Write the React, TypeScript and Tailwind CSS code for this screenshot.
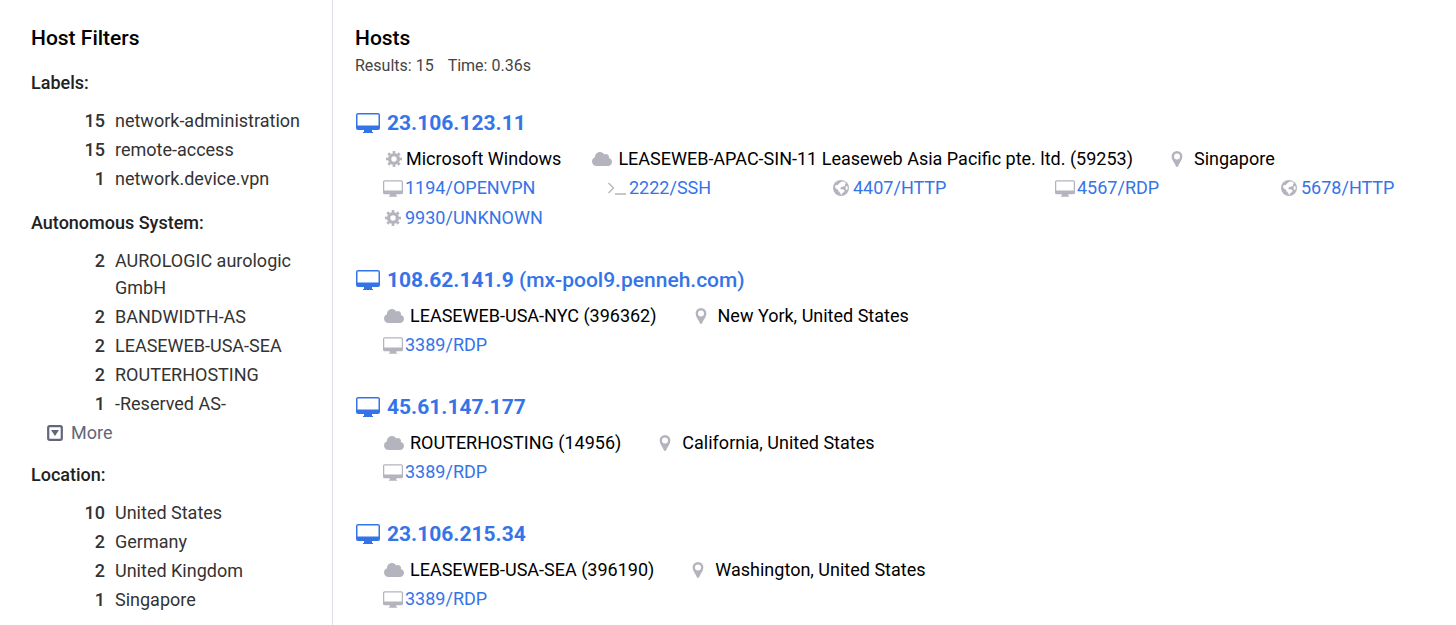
import React from 'react';
import { FaCloud } from 'react-icons/fa';

type ServiceKind = 'desktop' | 'terminal' | 'globe' | 'cog';

interface Service {
  name: string;
  kind: ServiceKind;
}

interface Host {
  ip: string;
  dns?: string;
  os?: string;
  network: string;
  location: string;
  services: Service[];
}

interface Filter {
  title: string;
  items: { count: number; label: string }[];
  more?: boolean;
}

const filters: Filter[] = [
  {
    title: 'Labels:',
    items: [
      { count: 15, label: 'network-administration' },
      { count: 15, label: 'remote-access' },
      { count: 1, label: 'network.device.vpn' },
    ],
  },
  {
    title: 'Autonomous System:',
    items: [
      { count: 2, label: 'AUROLOGIC aurologic GmbH' },
      { count: 2, label: 'BANDWIDTH-AS' },
      { count: 2, label: 'LEASEWEB-USA-SEA' },
      { count: 2, label: 'ROUTERHOSTING' },
      { count: 1, label: '-Reserved AS-' },
    ],
    more: true,
  },
  {
    title: 'Location:',
    items: [
      { count: 10, label: 'United States' },
      { count: 2, label: 'Germany' },
      { count: 2, label: 'United Kingdom' },
      { count: 1, label: 'Singapore' },
    ],
  },
];

const hosts: Host[] = [
  {
    ip: '23.106.123.11',
    os: 'Microsoft Windows',
    network: 'LEASEWEB-APAC-SIN-11 Leaseweb Asia Pacific pte. ltd. (59253)',
    location: 'Singapore',
    services: [
      { name: '1194/OPENVPN', kind: 'desktop' },
      { name: '2222/SSH', kind: 'terminal' },
      { name: '4407/HTTP', kind: 'globe' },
      { name: '4567/RDP', kind: 'desktop' },
      { name: '5678/HTTP', kind: 'globe' },
      { name: '9930/UNKNOWN', kind: 'cog' },
    ],
  },
  {
    ip: '108.62.141.9',
    dns: '(mx-pool9.penneh.com)',
    network: 'LEASEWEB-USA-NYC (396362)',
    location: 'New York, United States',
    services: [{ name: '3389/RDP', kind: 'desktop' }],
  },
  {
    ip: '45.61.147.177',
    network: 'ROUTERHOSTING (14956)',
    location: 'California, United States',
    services: [{ name: '3389/RDP', kind: 'desktop' }],
  },
  {
    ip: '23.106.215.34',
    network: 'LEASEWEB-USA-SEA (396190)',
    location: 'Washington, United States',
    services: [{ name: '3389/RDP', kind: 'desktop' }],
  },
];

const DesktopIcon = ({ className }: { className: string }) => (
  <svg viewBox="0 0 24 20" fill="currentColor" fillRule="evenodd" className={className} aria-hidden="true">
    <path d="M2 0h20a2 2 0 0 1 2 2v13a2 2 0 0 1-2 2h-6v2h1v1H7v-1h1v-2H2a2 2 0 0 1-2-2V2a2 2 0 0 1 2-2zM1.5 1.5v11h21v-11z" />
  </svg>
);

const TerminalIcon = () => (
  <svg viewBox="0 0 20 16" fill="none" stroke="currentColor" strokeWidth="1.3" className="w-5 h-4" aria-hidden="true">
    <path d="M1.5 3l5 5-5 5M8 14h11" />
  </svg>
);

// eight short teeth are the dashes of the outer ring
const CogIcon = () => (
  <svg viewBox="0 0 16 16" fill="none" stroke="currentColor" className="size-4" aria-hidden="true">
    <circle cx="8" cy="8" r="4.4" strokeWidth="3.4" />
    <circle cx="8" cy="8" r="6.8" strokeWidth="2.4" pathLength="80" strokeDasharray="5 5" strokeDashoffset="2.5" />
  </svg>
);

const GlobeIcon = () => (
  <svg viewBox="0 0 16 16" className="size-4" aria-hidden="true">
    <circle cx="8" cy="8" r="8" fill="currentColor" />
    <path
      d="M8.6 1.4l2.6.2 2 1.6-1.4 1 .6 1.2-2 1.2-2 .4-1.4 1.4 1.6.8 1.8.2 1.4 1-.8 1.6-1.8 1.2-1 2.2-.9-2.4-1.5-1.4-1.2-2-2-1.4-.6-1.6 1-1.8 1.6.4 1.2-1.4z"
      fill="#fff"
    />
    <path d="M12.6 6.6l1.6-.6.6 2-.8 2.2-1.4-1.2z" fill="#fff" />
  </svg>
);

const MarkerIcon = () => (
  <svg viewBox="0 0 12 16" fill="currentColor" fillRule="evenodd" className="h-4 w-3 text-[#b4b4be]" aria-hidden="true">
    <path d="M6 0a5.4 5.4 0 0 1 5.4 5.4C11.4 8.6 8.3 12 7.1 15.2c-.3 1-1.9 1-2.2 0C3.7 12 .6 8.6.6 5.4A5.4 5.4 0 0 1 6 0zM6 2.4a3 3 0 1 0 0 6 3 3 0 1 0 0-6z" />
  </svg>
);

const ServiceIcon = ({ kind }: { kind: ServiceKind }) => {
  if (kind === 'desktop') return <DesktopIcon className="w-5 h-[17px]" />;
  if (kind === 'terminal') return <TerminalIcon />;
  if (kind === 'globe') return <GlobeIcon />;
  return <CogIcon />;
};

const FilterGroup = ({ filter }: { filter: Filter }) => (
  <section className="mt-[15px]">
    <h3 className="font-medium leading-7">{filter.title}</h3>
    <ul className="mt-[10px]">
      {filter.items.map((item) => (
        <li key={item.label} className="flex gap-[10px] pb-0.5 leading-[27px] text-[#333]">
          <span className="w-[74px] shrink-0 text-right font-medium">{item.count}</span>
          <a href="#">{item.label}</a>
        </li>
      ))}
    </ul>
    {filter.more && (
      <button className="ml-4 flex items-center gap-2 leading-[27px] text-[#63667a]">
        <svg viewBox="0 0 16 16" className="size-4" aria-hidden="true">
          <rect x="1.2" y="1.2" width="13.6" height="13.6" rx="1.5" fill="none" stroke="currentColor" strokeWidth="2.2" />
          <path d="M4 5h8l-4 6z" fill="currentColor" />
        </svg>
        More
      </button>
    )}
  </section>
);

const HostCard = ({ host }: { host: Host }) => (
  <article className="mb-[31px] last:mb-0">
    <h3 className="flex items-center gap-[7px] pl-px text-[21px] leading-8 text-[#3574e8]">
      <DesktopIcon className="w-6 h-5" />
      <a href="#" className="font-medium">
        <strong className="font-bold">{host.ip}</strong>
        {host.dns && ` ${host.dns}`}
      </a>
    </h3>
    <div className="mt-1.5 flex flex-wrap pl-[29px] leading-7 text-black">
      {host.os && (
        <span className="mr-[31px] flex items-center gap-1 pl-0.5">
          <span className="text-[#b4b4be]">
            <CogIcon />
          </span>
          {host.os}
        </span>
      )}
      <span className="mr-[38px] flex items-center gap-[6px]">
        <FaCloud size={20} className="text-[#b4b4be]" />
        {host.network}
      </span>
      <span className="flex items-center gap-[11px]">
        <MarkerIcon />
        {host.location}
      </span>
    </div>
    <ul className="grid grid-cols-[repeat(4,1fr)_147px] pl-7 leading-[30px]">
      {host.services.map((service) => (
        <li key={service.name} className="flex items-center gap-0.5">
          <span className="flex w-5 justify-center text-[#b4b4be]">
            <ServiceIcon kind={service.kind} />
          </span>
          <a href="#" className="text-[#3574e8]">{service.name}</a>
        </li>
      ))}
    </ul>
  </article>
);

const App: React.FC = () => (
  <div className="flex min-h-screen bg-white font-['Roboto',sans-serif] text-[18px] leading-7 text-[#222]">
    <aside className="w-[333px] shrink-0 border-r border-[#dcdde8] pl-[31px] pr-6 pt-6">
      <h2 className="mb-[17px] text-[21px] font-medium leading-7 text-black">Host Filters</h2>
      {filters.map((filter) => (
        <FilterGroup key={filter.title} filter={filter} />
      ))}
    </aside>
    <main className="min-w-0 grow pl-[22px] pr-[30px] pt-6">
      <h2 className="text-[21px] font-medium leading-7 text-black">Hosts</h2>
      <p className="mb-[27px] flex gap-[14px] text-[16px] text-[#444]">
        <span>Results: 15</span>
        <span>Time: 0.36s</span>
      </p>
      {hosts.map((host) => (
        <HostCard key={host.ip} host={host} />
      ))}
    </main>
  </div>
);

export default App;
